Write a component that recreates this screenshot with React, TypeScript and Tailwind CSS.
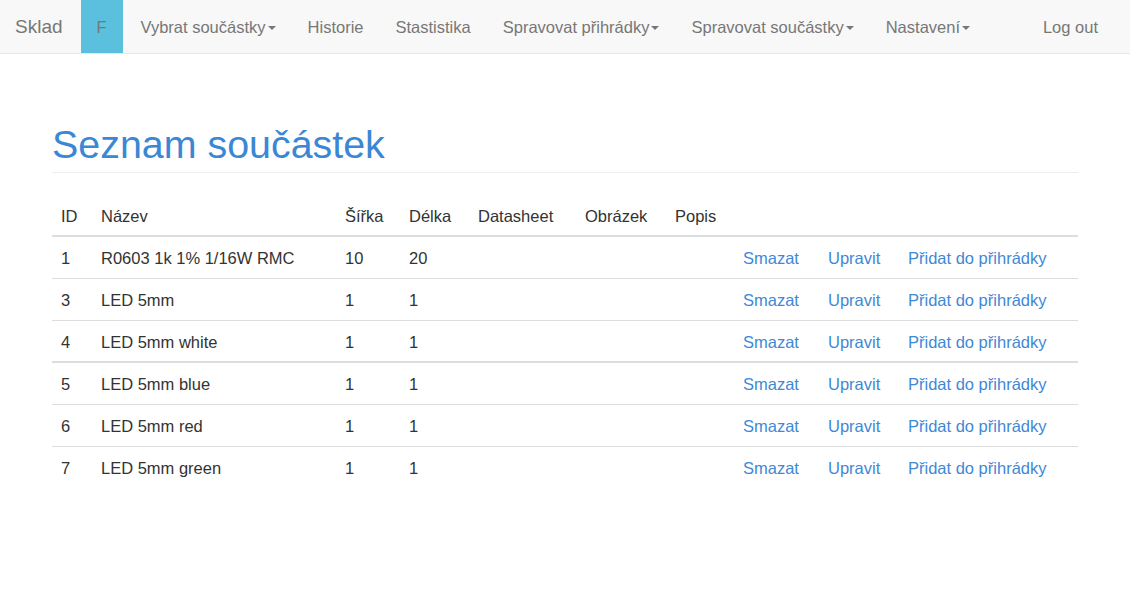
import React from "react";

type Part = { id: number; name: string; w: string; l: string };

const parts: Part[][] = [
  [
    { id: 1, name: "R0603 1k 1% 1/16W RMC", w: "10", l: "20" },
    { id: 3, name: "LED 5mm", w: "1", l: "1" },
    { id: 4, name: "LED 5mm white", w: "1", l: "1" },
  ],
  [
    { id: 5, name: "LED 5mm blue", w: "1", l: "1" },
    { id: 6, name: "LED 5mm red", w: "1", l: "1" },
    { id: 7, name: "LED 5mm green", w: "1", l: "1" },
  ],
];

function Caret() {
  return (
    <span className="ml-[2px] inline-block h-0 w-0 border-x-[4px] border-t-[4px] border-x-transparent border-t-[#777] align-middle" />
  );
}

function NavLink({ label, dropdown }: { label: string; dropdown?: boolean }) {
  return (
    <a href="#" className="flex h-full items-center px-4 pt-[2px] text-[#777] hover:text-[#333]">
      {label}
      {dropdown && <Caret />}
    </a>
  );
}

function Navbar() {
  return (
    <header className="flex h-[54px] items-stretch border-b border-[#e7e7e7] bg-[#f8f8f8] text-[16.5px]">
      <a href="#" className="flex items-center pl-[15px] pr-[18px] pt-[2px] text-[19px] text-[#777]">
        Sklad
      </a>
      <a href="#" className="flex w-[42px] items-center justify-center bg-[#5bc0de] pt-[2px] text-[#777]">
        F
      </a>
      <nav className="ml-[2px] flex items-stretch">
        <NavLink label="Vybrat součástky" dropdown />
        <NavLink label="Historie" />
        <NavLink label="Stastistika" />
        <NavLink label="Spravovat přihrádky" dropdown />
        <NavLink label="Spravovat součástky" dropdown />
        <NavLink label="Nastavení" dropdown />
      </nav>
      <div className="ml-auto mr-[16px] flex items-stretch">
        <NavLink label="Log out" />
      </div>
    </header>
  );
}

function Row({ p, last }: { p: Part; last?: boolean }) {
  const link = "text-[#3f88d6] hover:underline";
  return (
    <tr className={last ? "h-[42px]" : "h-[42px] border-b border-[#ddd]"}>
      <td className="px-[9px] pt-[2px]">{p.id}</td>
      <td className="px-[8px] pt-[2px]">{p.name}</td>
      <td className="px-[8px] pt-[2px]">{p.w}</td>
      <td className="px-[8px] pt-[2px]">{p.l}</td>
      <td className="px-[8px]"></td>
      <td className="px-[8px]"></td>
      <td className="px-[8px]"></td>
      <td className="px-[8px] pt-[2px]">
        <a href="#" className={link}>Smazat</a>
      </td>
      <td className="px-[8px] pt-[2px]">
        <a href="#" className={link}>Upravit</a>
      </td>
      <td className="px-[8px] pt-[2px]">
        <a href="#" className={link}>Přidat do přihrádky</a>
      </td>
    </tr>
  );
}

export default function App() {
  return (
    <div className="min-h-screen bg-white text-[16.5px] text-[#333]" style={{ fontFamily: '"Liberation Sans", Arial, sans-serif' }}>
      <Navbar />
      <main className="mx-auto w-[1026px]">
        <h1 className="mt-[69px] border-b border-[#eee] pb-[6px] text-[39.4px] leading-[1.1] text-[#3a87d6]">
          Seznam součástek
        </h1>
        <table className="mt-[23px] w-full table-fixed border-collapse text-left">
          <colgroup>
            <col className="w-[41px]" />
            <col className="w-[244px]" />
            <col className="w-[64px]" />
            <col className="w-[69px]" />
            <col className="w-[107px]" />
            <col className="w-[90px]" />
            <col className="w-[68px]" />
            <col className="w-[85px]" />
            <col className="w-[80px]" />
            <col />
          </colgroup>
          <thead>
            <tr className="h-[40px] border-b-2 border-[#ddd] font-normal">
              <th className="px-[9px] pt-[1px] font-normal">ID</th>
              <th className="px-[8px] pt-[1px] font-normal">Název</th>
              <th className="px-[8px] pt-[1px] font-normal">Šířka</th>
              <th className="px-[8px] pt-[1px] font-normal">Délka</th>
              <th className="px-[8px] pt-[1px] font-normal">Datasheet</th>
              <th className="px-[8px] pt-[1px] font-normal">Obrázek</th>
              <th className="px-[8px] pt-[1px] font-normal">Popis</th>
              <th></th>
              <th></th>
              <th></th>
            </tr>
          </thead>
          {parts.map((group, gi) => (
            <tbody key={gi} className={gi > 0 ? "border-t-2 border-[#ddd]" : ""}>
              {group.map((p, i) => (
                <Row key={p.id} p={p} last={i === group.length - 1} />
              ))}
            </tbody>
          ))}
        </table>
      </main>
    </div>
  );
}
